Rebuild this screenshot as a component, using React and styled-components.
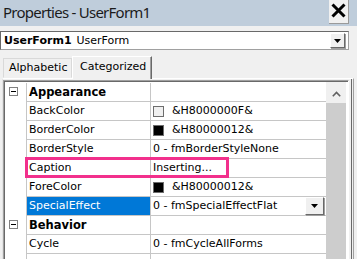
import React from 'react';
import styled, { createGlobalStyle } from 'styled-components';

const GlobalStyle = createGlobalStyle`
  html, body {
    margin: 0;
    padding: 0;
    background: #f0f0f0;
  }
  body {
    font-family: "DejaVu Sans", "Liberation Sans", sans-serif;
    font-size: 11px;
    color: #000;
  }
`;

const PINK = '#f2308c';
const LINE = '#c6c6c6';

const Window = styled.div`
  width: 357px;
  height: 259px;
  overflow: hidden;
  background: #f0f0f0;
  display: flex;
  flex-direction: column;
  & > * {
    flex: none;
  }
`;

const TitleBar = styled.div`
  height: 26px;
  background: #bfcddb;
  display: flex;
  align-items: flex-start;
`;

const Title = styled.div`
  font-family: "Noto Sans", "Open Sans", sans-serif;
  font-size: 15px;
  letter-spacing: -0.75px;
  line-height: 25px;
  padding-left: 3px;
  color: #1b1b1b;
  flex: 1;
`;

const CloseButton = styled.div`
  width: 20px;
  height: 24px;
  margin-right: 8px;
  box-sizing: border-box;
  background: #f0f0f0;
  border-right: 1px solid #9a9a9a;
  border-bottom: 1px solid #9a9a9a;
  display: flex;
  align-items: center;
  justify-content: center;
  padding-bottom: 2px;
`;

const Combo = styled.div`
  margin-top: 5px;
  width: 349px;
  height: 19px;
  box-sizing: border-box;
  background: #fff;
  border: 1px solid #a0a0a0;
  border-top-color: #696969;
  border-left-color: #696969;
  display: flex;
  align-items: center;
  padding-left: 3px;
`;

const ComboText = styled.div`
  flex: 1;
  white-space: nowrap;
  b {
    font-weight: bold;
    margin-right: 5px;
  }
`;

const DropButton = styled.div`
  width: ${p => p.$w || 15}px;
  height: ${p => p.$h || 15}px;
  margin-right: ${p => p.$mr ?? 3}px;
  box-sizing: border-box;
  background: #f0f0f0;
  border: 1px solid #fff;
  border-right-color: #696969;
  border-bottom-color: #696969;
  box-shadow: 1px 1px 0 #a0a0a0;
  display: flex;
  align-items: center;
  justify-content: center;
  flex: none;
`;

const Tabs = styled.div`
  margin-top: 6px;
  height: 22px;
  padding-left: 3px;
  display: flex;
  align-items: flex-end;
  position: relative;
  z-index: 1;
`;

const Tab = styled.div`
  box-sizing: border-box;
  height: ${p => (p.$active ? 23 : 20)}px;
  margin-bottom: ${p => (p.$active ? -1 : 0)}px;
  padding: ${p => (p.$active ? '3px 0 0 7px' : '2px 0 0 5px')};
  width: ${p => (p.$active ? 80 : 69)}px;
  background: #f0f0f0;
  border: 1px solid ${p => (p.$active ? '#fff' : '#d9d9d9')};
  border-bottom: ${p => (p.$active ? 'none' : '1px solid #f0f0f0')};
  border-right-color: ${p => (p.$active ? '#696969' : '#d9d9d9')};
  box-shadow: ${p => (p.$active ? 'inset -1px 0 0 #a0a0a0' : 'none')};
  white-space: nowrap;
`;

const Panel = styled.div`
  margin-left: 2px;
  width: 352px;
  height: 200px;
  box-sizing: border-box;
  border-top: 1px solid #fff;
  border-left: 1px solid #e3e3e3;
  border-right: 1px solid #a0a0a0;
  box-shadow: inset -1px 0 0 #f0f0f0, inset -2px 0 0 #696969;
  padding-top: 1px;
`;

const Grid = styled.div`
  position: relative;
  width: 346px;
  height: 198px;
  box-sizing: border-box;
  border: 1px solid #a0a0a0;
  border-right-color: #fff;
  box-shadow: inset 1px 1px 0 #696969;
  background: #fff;
  display: flex;
  padding-right: 2px;
`;

const Rows = styled.div`
  width: 322px;
  padding-top: 2px;
  padding-left: 1px;
  box-sizing: border-box;
`;

const Row = styled.div`
  display: grid;
  grid-template-columns: 21px 125px 1fr;
  height: 19px;
`;

const Gutter = styled.div`
  padding: 4px 0 0 4px;
  box-sizing: border-box;
`;

const MinusBox = styled.div`
  width: 9px;
  height: 9px;
  box-sizing: border-box;
  border: 1px solid #808080;
  background: #fff;
  display: flex;
  align-items: center;
  justify-content: center;
  &::after {
    content: '';
    width: 5px;
    height: 1px;
    background: #000;
  }
`;

const NameCell = styled.div`
  border-left: 1px solid ${LINE};
  border-right: 1px solid ${LINE};
  border-bottom: 1px solid ${LINE};
  padding-left: 2px;
  line-height: 18px;
  white-space: nowrap;
  font-weight: ${p => (p.$category ? 'bold' : 'normal')};
  font-size: ${p => (p.$category ? '11.5px' : '11px')};
  background: ${p => (p.$selected ? '#0078d7' : '#fff')};
  color: ${p => (p.$selected ? '#fff' : '#000')};
`;

const ValueCell = styled.div`
  border-bottom: 1px solid ${LINE};
  padding-left: 2px;
  line-height: 18px;
  white-space: nowrap;
  display: flex;
  align-items: center;
`;

const ValueText = styled.span`
  flex: 1;
`;

const Swatch = styled.div`
  width: 11px;
  height: 11px;
  box-sizing: border-box;
  border: 1px solid #6d6d6d;
  background: ${p => p.$color};
  margin-right: 8px;
  flex: none;
`;

const ScrollBar = styled.div`
  width: 20px;
  background: #f0f0f0;
  margin-top: 1px;
  display: flex;
  flex-direction: column;
`;

const ScrollArrow = styled.div`
  height: 21px;
  display: flex;
  align-items: center;
  justify-content: center;
  padding-top: 2px;
  box-sizing: border-box;
`;

const ScrollThumb = styled.div`
  flex: 1;
  background: #cdcdcd;
`;

const Highlight = styled.div`
  position: absolute;
  left: 21px;
  top: 76px;
  width: 204px;
  height: 21px;
  box-sizing: border-box;
  border: 3px solid ${PINK};
  pointer-events: none;
`;

const DownArrow = () => (
  <svg width="7" height="4" viewBox="0 0 7 4">
    <path d="M0 0 H7 L3.5 4 Z" fill="#000" />
  </svg>
);

const rows = [
  { category: 'Appearance' },
  { name: 'BackColor', swatch: '#f0f0f0', value: '&H8000000F&' },
  { name: 'BorderColor', swatch: '#000', value: '&H80000012&' },
  { name: 'BorderStyle', value: '0 - fmBorderStyleNone' },
  { name: 'Caption', value: 'Inserting...' },
  { name: 'ForeColor', swatch: '#000', value: '&H80000012&' },
  { name: 'SpecialEffect', value: '0 - fmSpecialEffectFlat', selected: true, drop: true },
  { category: 'Behavior' },
  { name: 'Cycle', value: '0 - fmCycleAllForms' },
  { name: '', value: '' },
];

export default function App() {
  return (
    <Window>
      <GlobalStyle />
      <TitleBar>
        <Title>Properties - UserForm1</Title>
        <CloseButton>
          <svg width="15" height="15" viewBox="0 0 15 15">
            <path d="M1.5 1.5 L13.5 13.5 M13.5 1.5 L1.5 13.5" stroke="#000" strokeWidth="3" />
          </svg>
        </CloseButton>
      </TitleBar>

      <Combo>
        <ComboText>
          <b>UserForm1</b>UserForm
        </ComboText>
        <DropButton>
          <DownArrow />
        </DropButton>
      </Combo>

      <Tabs>
        <Tab>Alphabetic</Tab>
        <Tab $active>Categorized</Tab>
      </Tabs>

      <Panel>
        <Grid>
          <Rows>
            {rows.map((r, i) =>
              r.category ? (
                <Row key={i}>
                  <Gutter>
                    <MinusBox />
                  </Gutter>
                  <NameCell $category>{r.category}</NameCell>
                  <ValueCell />
                </Row>
              ) : (
                <Row key={i}>
                  <Gutter />
                  <NameCell $selected={r.selected}>{r.name}</NameCell>
                  <ValueCell>
                    {r.swatch && <Swatch $color={r.swatch} />}
                    <ValueText>{r.value}</ValueText>
                    {r.drop && (
                      <DropButton $w={19} $h={18} $mr={2}>
                        <DownArrow />
                      </DropButton>
                    )}
                  </ValueCell>
                </Row>
              )
            )}
          </Rows>
          <ScrollBar>
            <ScrollArrow>
              <svg width="9" height="6" viewBox="0 0 9 6">
                <path d="M0.8 5.2 L4.5 1.5 L8.2 5.2" stroke="#606060" strokeWidth="1.6" fill="none" />
              </svg>
            </ScrollArrow>
            <ScrollThumb />
          </ScrollBar>
          <Highlight />
        </Grid>
      </Panel>
    </Window>
  );
}
